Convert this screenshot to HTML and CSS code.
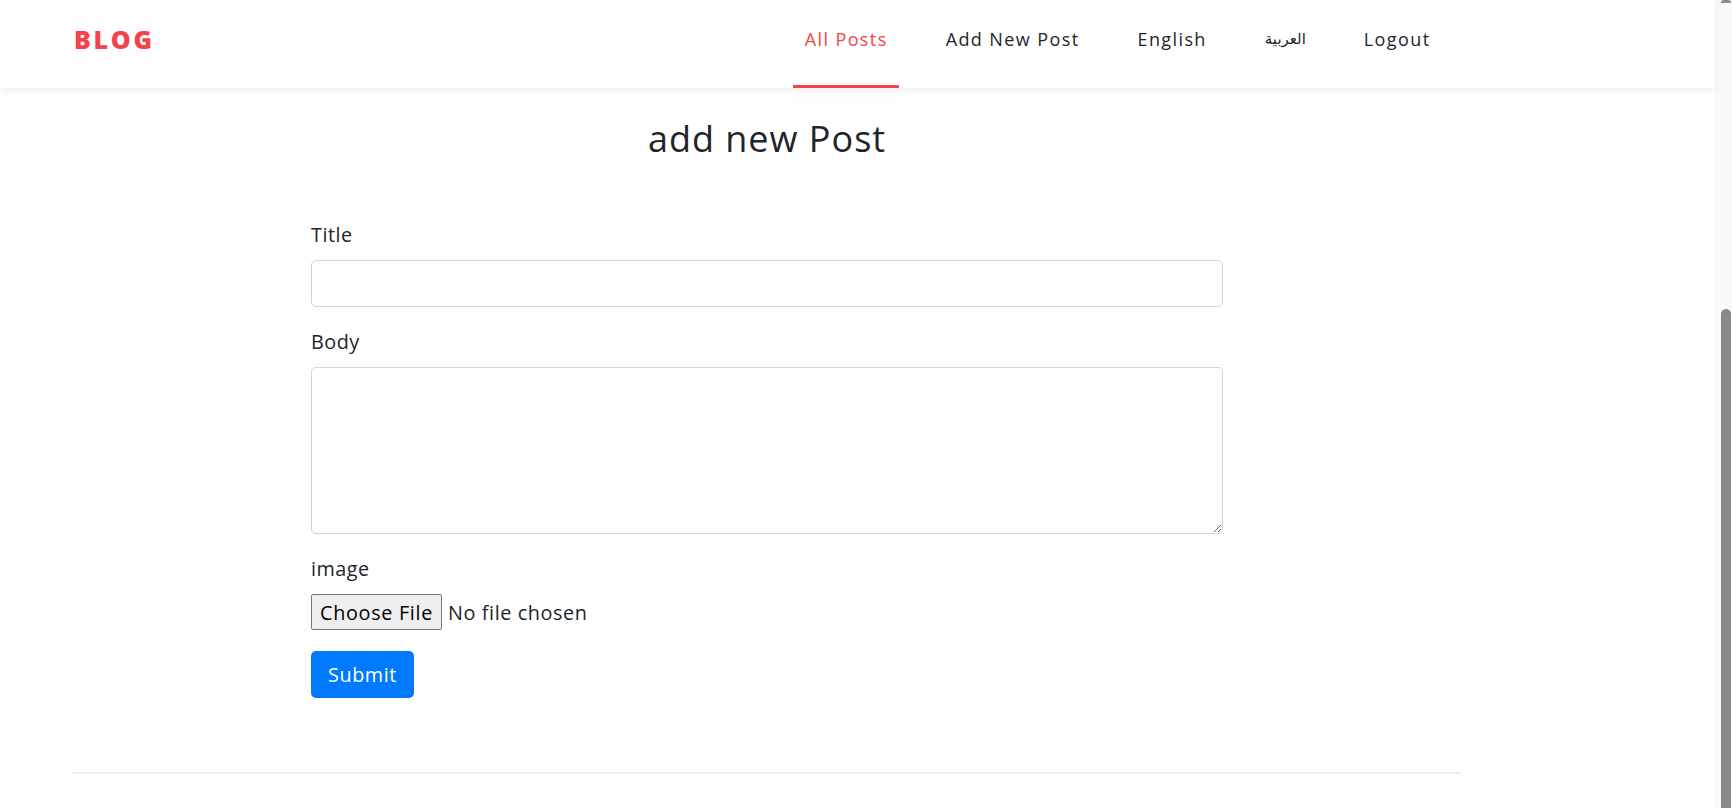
FILE: index.html
```html
<!DOCTYPE html>
<html lang="en">
<head>
<meta charset="utf-8">
<title>Blog - add new Post</title>
<link rel="stylesheet" href="styles.css">
</head>
<body>
<div class="window">
  <div class="viewport">
    <header class="site-header">
      <a class="brand" href="#">BLOG</a>
      <nav class="main-nav">
        <a class="nav-link active" href="#">All Posts</a>
        <a class="nav-link" href="#">Add New Post</a>
        <a class="nav-link" href="#">English</a>
        <a class="nav-link arabic" href="#" lang="ar">العربية</a>
        <a class="nav-link" href="#">Logout</a>
      </nav>
    </header>

    <main class="page">
      <div class="container">
        <h2 class="page-title">add new Post</h2>
        <form class="post-form">
          <div class="form-group">
            <label class="form-label" for="title">Title</label>
            <input class="form-control" id="title" type="text">
          </div>
          <div class="form-group">
            <label class="form-label" for="body">Body</label>
            <textarea class="form-control form-textarea" id="body"></textarea>
          </div>
          <div class="form-group form-group-file">
            <label class="form-label" for="image">image</label>
            <input class="file-input" id="image" type="file">
          </div>
          <button class="btn-submit" type="submit">Submit</button>
        </form>
        <hr class="divider">
      </div>
    </main>
  </div>
  <div class="scrollbar" aria-hidden="true">
    <div class="sb-arrow"></div>
    <div class="sb-thumb"></div>
  </div>
</div>
</body>
</html>
```

FILE: styles.css
```css
html, body {
  margin: 0;
  height: 100%;
  overflow: hidden;
}
body {
  background: #fff;
  color: #212529;
  font-family: "Open Sans", "DejaVu Sans", sans-serif;
}
.window {
  display: flex;
  height: 808px;
}
.viewport {
  flex: 1;
  min-width: 0;
  display: flex;
  flex-direction: column;
}
.scrollbar {
  width: 17px;
  flex: none;
  background: #fafafa;
  display: flex;
  flex-direction: column;
  align-items: flex-end;
  padding-right: 1px;
  box-sizing: border-box;
}
.sb-arrow {
  width: 10px;
  height: 3px;
  background: #8a8a8a;
  border-radius: 3px 3px 0 0;
  margin-bottom: 306px;
}
.sb-thumb {
  width: 10px;
  flex: 1;
  background: #8a8a8a;
  border-radius: 5px 5px 0 0;
}
.site-header {
  flex: none;
  position: relative;
  z-index: 2;
  display: flex;
  height: 88px;
  padding: 0 273px 0 74px;
  background: #fff;
  box-shadow: 0 2px 10px rgba(0, 0, 0, 0.08);
}
.brand {
  display: flex;
  align-items: center;
  padding-bottom: 11px;
  font-size: 25px;
  font-weight: 800;
  color: #f4434b;
  text-decoration: none;
  letter-spacing: 2.7px;
}
.main-nav {
  margin-left: auto;
  display: flex;
  gap: 35px;
}
.nav-link {
  display: flex;
  align-items: center;
  padding: 0 11.5px 7px;
  border-bottom: 3px solid transparent;
  font-size: 18px;
  font-weight: 500;
  letter-spacing: 1.4px;
  color: #212529;
  text-decoration: none;
}
.nav-link.active {
  color: #f4434b;
  border-bottom-color: #f4434b;
}
.nav-link.arabic {
  font-family: "DejaVu Sans", sans-serif;
  font-size: 15px;
  letter-spacing: 0;
}
.page {
  padding-top: 30px;
}
.container {
  margin-left: 73px;
  width: 1388px;
}
.page-title {
  margin: 0 0 60px;
  text-align: center;
  font-size: 36px;
  line-height: 42px;
  font-weight: 500;
  letter-spacing: 1px;
  color: #212529;
}
.post-form {
  width: 912px;
  margin: 0 auto;
}
.form-group {
  margin-bottom: 20px;
}
.form-group-file {
  margin-bottom: 21px;
}
.form-label {
  display: block;
  margin-bottom: 10px;
  font-size: 19.8px;
  line-height: 30px;
  letter-spacing: 0.5px;
  color: #212529;
}
.form-control {
  display: block;
  box-sizing: border-box;
  width: 100%;
  height: 47px;
  border: 1px solid #ced4da;
  border-radius: 5px;
  background: #fff;
  font: inherit;
  font-size: 19.8px;
  padding: 6px 13px;
}
.form-textarea {
  height: 167px;
  resize: vertical;
}
.file-input {
  display: block;
  font-family: "Open Sans", "DejaVu Sans", sans-serif;
  font-size: 19.8px;
  letter-spacing: 0.6px;
  color: #212529;
  height: 36px;
}
.file-input::file-selector-button {
  font: inherit;
  letter-spacing: 0.7px;
  height: 36px;
  padding: 0 8px;
  margin-right: 6px;
  border: 1px solid #767676;
  border-radius: 2px;
  background: #efefef;
  color: #000;
}
.btn-submit {
  display: block;
  width: 103px;
  height: 47px;
  border: none;
  border-radius: 5px;
  background: #007bff;
  color: #fff;
  font-family: "Open Sans", "DejaVu Sans", sans-serif;
  font-size: 19.8px;
  letter-spacing: 0.6px;
  padding: 0;
}
.divider {
  margin: 74px 0 0;
  border: 0;
  border-top: 2px solid #eeeeee;
}
```
